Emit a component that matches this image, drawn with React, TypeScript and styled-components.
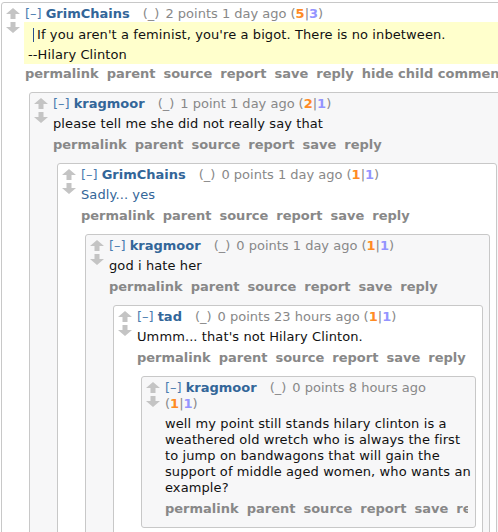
import React from "react";
import styled, { createGlobalStyle } from "styled-components";

const Global = createGlobalStyle`
  html, body { margin: 0; padding: 0; background: #fff; overflow: hidden; }
  body {
    font-family: "DejaVu Sans", "Liberation Sans", sans-serif;
    font-size: 13px;
    color: #222;
  }
`;

const Page = styled.div`
  width: 510px;
  padding: 2px 0 0 1px;
`;

const Box = styled.div<{ $alt: boolean; $nested: boolean }>`
  background: ${(p) => (p.$alt ? "#f7f7f8" : "#ffffff")};
  border: 1px solid #c8c8c8;
  border-radius: 3px;
  margin: ${(p) => (p.$nested ? "10px 6px 0 27px" : "0")};
  padding: 3px 0 10px 0;
`;

const Row = styled.div`
  display: flex;
  align-items: flex-start;
`;

const Midcol = styled.div`
  width: 14px;
  margin: 2px 5px 0 4px;
  display: flex;
  flex-direction: column;
  gap: 3px;
  flex: none;
`;

const Entry = styled.div`
  flex: 1;
  min-width: 0;
  padding-right: 7px;
`;

const Tagline = styled.div`
  line-height: 16px;
  color: #888;
`;

const Expand = styled.span`
  color: #4a7cb0;
`;

const Author = styled.span`
  color: #336699;
  font-weight: bold;
  margin-left: 4px;
`;

const Tag = styled.span`
  margin-left: 13px;
`;

const Score = styled.span`
  margin-left: 6px;
`;

const Tally = styled.span<{ $wrapped?: boolean }>`
  margin-left: ${(p) => (p.$wrapped ? "0" : "4px")};
`;

const Ups = styled.b`
  color: #ff8b24;
`;

const Downs = styled.b`
  color: #9494ff;
`;

const Body = styled.div<{ $highlight?: boolean; $link?: boolean }>`
  line-height: 16px;
  letter-spacing: 0.1px;
  color: ${(p) => (p.$link ? "#336699" : "#111")};
  margin: ${(p) => (p.$highlight ? "0 0 0 -1px" : "4px 0 0 0")};
  padding: ${(p) => (p.$highlight ? "5px 0 1px 4px" : "0")};
  background: ${(p) => (p.$highlight ? "#ffffcc" : "transparent")};
  white-space: nowrap;
`;

const Para = styled.p`
  margin: 0;
  & + & {
    margin-top: 4px;
  }
`;

const Caret = styled.span`
  display: inline-block;
  width: 1px;
  height: 14px;
  background: #2a4f8f;
  vertical-align: -3px;
  margin: 0 3px 0 5px;
`;

const Buttons = styled.ul<{ $tight?: boolean }>`
  list-style: none;
  margin: ${(p) => (p.$tight ? "2px" : "5px")} 0 0 0;
  padding: 0;
  display: flex;
  gap: 8px;
  white-space: nowrap;
  overflow: hidden;
  line-height: 16px;
`;

const Button = styled.li`
  color: #888;
  font-weight: bold;
  flex: none;
`;

const Arrow = ({ down }: { down?: boolean }) => (
  <svg width="14" height="11" viewBox="0 0 14 11" style={down ? { transform: "scaleY(-1)" } : undefined}>
    <path d="M7 0 L14 6 L9.5 6 L9.5 11 L4.5 11 L4.5 6 L0 6 Z" fill="#c4c4c4" />
  </svg>
);

type C = {
  author: string;
  score: string;
  ups: number;
  downs: number;
  body: React.ReactNode;
  highlight?: boolean;
  link?: boolean;
  hideChild?: boolean;
  wrapTally?: boolean;
  child?: C;
};

const data: C = {
  author: "GrimChains",
  score: "2 points 1 day ago",
  ups: 5,
  downs: 3,
  highlight: true,
  hideChild: true,
  body: (
    <>
      <Para>
        <Caret />
        If you aren't a feminist, you're a bigot. There is no inbetween.
      </Para>
      <Para>--Hilary Clinton</Para>
    </>
  ),
  child: {
    author: "kragmoor",
    score: "1 point 1 day ago",
    ups: 2,
    downs: 1,
    body: "please tell me she did not really say that",
    child: {
      author: "GrimChains",
      score: "0 points 1 day ago",
      ups: 1,
      downs: 1,
      link: true,
      body: "Sadly... yes",
      child: {
        author: "kragmoor",
        score: "0 points 1 day ago",
        ups: 1,
        downs: 1,
        body: "god i hate her",
        child: {
          author: "tad",
          score: "0 points 23 hours ago",
          ups: 1,
          downs: 1,
          body: "Ummm... that's not Hilary Clinton.",
          child: {
            author: "kragmoor",
            score: "0 points 8 hours ago",
            ups: 1,
            downs: 1,
            wrapTally: true,
            body: (
              <>
                well my point still stands hilary clinton is a<br />
                weathered old wretch who is always the first<br />
                to jump on bandwagons that will gain the<br />
                support of middle aged women, who wants an<br />
                example?
              </>
            ),
          },
        },
      },
    },
  },
};

const Comment = ({ c, depth }: { c: C; depth: number }) => {
  const buttons = ["permalink", "parent", "source", "report", "save", "reply"];
  if (c.hideChild) buttons.push("hide child comments");
  return (
    <Box $alt={depth % 2 === 1} $nested={depth > 0}>
      <Row>
        <Midcol>
          <Arrow />
          <Arrow down />
        </Midcol>
        <Entry>
          <Tagline>
            <Expand>[–]</Expand>
            <Author>{c.author}</Author>
            <Tag>(_)</Tag>
            <Score>{c.score}</Score>
            {c.wrapTally && <br />}
            <Tally $wrapped={c.wrapTally}>
              (<Ups>{c.ups}</Ups>|<Downs>{c.downs}</Downs>)
            </Tally>
          </Tagline>
          <Body $highlight={c.highlight} $link={c.link}>
            {c.body}
          </Body>
          <Buttons $tight={c.highlight}>
            {buttons.map((b) => (
              <Button key={b}>{b}</Button>
            ))}
          </Buttons>
        </Entry>
      </Row>
      {c.child && <Comment c={c.child} depth={depth + 1} />}
    </Box>
  );
};

export default function App() {
  return (
    <>
      <Global />
      <Page>
        <Comment c={data} depth={0} />
      </Page>
    </>
  );
}
